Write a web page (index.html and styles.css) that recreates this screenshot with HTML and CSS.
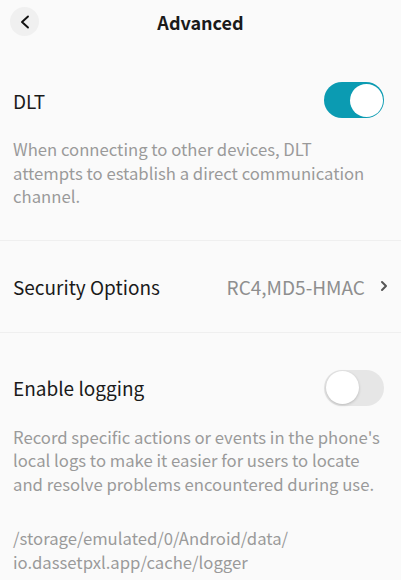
FILE: index.html
```html
<!DOCTYPE html>
<html lang="en">
<head>
    <meta charset="UTF-8">
    <meta name="viewport" content="width=device-width, initial-scale=1.0">
    <title>Advanced</title>
    <link rel="stylesheet" href="styles.css">
</head>
<body>
    <header class="top-bar">
        <button class="back-btn" aria-label="Back">
            <svg width="14" height="14" viewBox="0 0 14 14">
                <path d="M10 1.5 L4 7 L10 12.5" fill="none" stroke="#111" stroke-width="1.9" stroke-linecap="round" stroke-linejoin="round"/>
            </svg>
        </button>
        <h1>Advanced</h1>
    </header>

    <section class="group">
        <div class="row switch-row">
            <span class="label">DLT</span>
            <span class="switch on"><span class="knob"></span></span>
        </div>
        <p class="desc">When connecting to other devices, DLT<br>attempts to establish a direct communication channel.</p>
    </section>

    <section class="group link-group">
        <div class="row">
            <span class="label">Security Options</span>
            <span class="value">RC4,MD5-HMAC
                <svg width="8" height="12" viewBox="0 0 8 12">
                    <path d="M2 2 L6 6 L2 10" fill="none" stroke="#555" stroke-width="2" stroke-linecap="round" stroke-linejoin="round"/>
                </svg>
            </span>
        </div>
    </section>

    <section class="group last">
        <div class="row switch-row">
            <span class="label">Enable logging</span>
            <span class="switch"><span class="knob"></span></span>
        </div>
        <p class="desc">Record specific actions or events in the phone's local logs to make it easier for users to locate and resolve problems encountered during use.</p>
        <p class="desc path">/storage/emulated/0/Android/data/<br>io.dassetpxl.app/cache/logger</p>
    </section>
</body>
</html>
```

FILE: styles.css
```css
body {
    margin: 0;
    background: #fafafa;
    font-family: "Noto Sans CJK SC", sans-serif;
    color: #1a1a1a;
}
.top-bar {
    position: relative;
    height: 44px;
    display: flex;
    align-items: center;
    justify-content: center;
}
.top-bar h1 {
    margin: 0;
    font-size: 18px;
    font-weight: 700;
}
.back-btn {
    position: absolute;
    left: 10px;
    top: 7px;
    width: 29px;
    height: 29px;
    border: none;
    border-radius: 50%;
    background: #f0f0f0;
    padding: 0;
    display: flex;
    align-items: center;
    justify-content: center;
}
.group {
    padding: 34px 13px 31px;
    border-bottom: 1px solid #efefef;
}
.group.last {
    border-bottom: none;
    padding-top: 33px;
}
.link-group {
    padding: 0 13px;
}
.link-group .row {
    height: 91px;
}
.row {
    display: flex;
    align-items: center;
    justify-content: space-between;
}
.switch-row {
    height: 44px;
}
.label {
    font-size: 19px;
}
.value {
    display: flex;
    align-items: center;
    gap: 15px;
    font-size: 19px;
    color: #8e8e8e;
}
.switch {
    position: relative;
    width: 60px;
    height: 36px;
    border-radius: 18px;
    background: #e6e6e6;
    margin-right: 4px;
}
.switch.on {
    background: #0b9bb2;
}
.knob {
    position: absolute;
    top: 1.5px;
    left: 1.5px;
    width: 33px;
    height: 33px;
    border-radius: 50%;
    background: #fff;
    box-shadow: 0 1px 3px rgba(0, 0, 0, 0.2);
}
.switch.on .knob {
    left: auto;
    right: 1.5px;
    box-shadow: none;
}
.desc {
    margin: 16px 0 0;
    font-size: 16.7px;
    line-height: 23.5px;
    color: #9a9a9a;
}
.path {
    margin-top: 31px;
}
```
